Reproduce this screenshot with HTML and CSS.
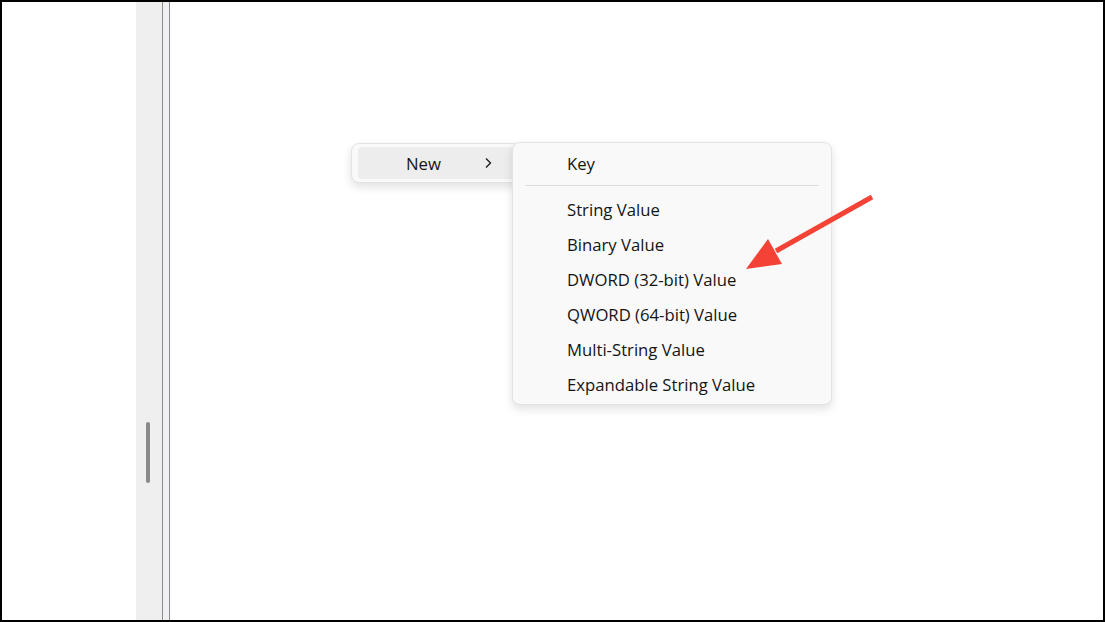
FILE: index.html
```html
<!DOCTYPE html>
<html>
<head>
<meta charset="utf-8">
<link rel="stylesheet" href="styles.css">
</head>
<body>
<div class="frame">
  <div class="left-pane"></div>
  <div class="sidebar"><div class="thumb"></div></div>
  <div class="divider"></div>
  <div class="main">
    <div class="menu parent-menu">
      <div class="item hovered">
        <span class="label">New</span>
        <svg class="chev" width="10" height="12" viewBox="0 0 10 12"><path d="M3 1.5 L7.5 6 L3 10.5" fill="none" stroke="#1a1a1a" stroke-width="1.3"/></svg>
      </div>
    </div>
    <div class="menu sub-menu">
      <div class="sitem">Key</div>
      <div class="sep"></div>
      <div class="sitem">String Value</div>
      <div class="sitem">Binary Value</div>
      <div class="sitem">DWORD (32-bit) Value</div>
      <div class="sitem">QWORD (64-bit) Value</div>
      <div class="sitem">Multi-String Value</div>
      <div class="sitem">Expandable String Value</div>
    </div>
    <svg class="arrow" width="140" height="90" viewBox="0 0 140 90">
      <line x1="132" y1="13" x2="36" y2="67" stroke="#f44336" stroke-width="5" stroke-linecap="butt"/>
      <polygon points="6,85 28,55 42,80" fill="#f44336"/>
    </svg>
  </div>
</div>
</body>
</html>
```
FILE: styles.css
```css
html, body {
  margin: 0;
  padding: 0;
  background: #ffffff;
}
body {
  font-family: "Open Sans", "Noto Sans", sans-serif;
  color: #141414;
}
.frame {
  box-sizing: border-box;
  width: 1105px;
  height: 622px;
  border: 2px solid #000;
  display: flex;
  background: #fff;
}
.left-pane {
  width: 134px;
  flex: none;
  background: #fff;
}
.sidebar {
  width: 26px;
  flex: none;
  background: #efefef;
  border-right: 1px solid #8a8a94;
  position: relative;
}
.thumb {
  position: absolute;
  left: 10px;
  top: 420px;
  width: 4px;
  height: 61px;
  border-radius: 2px;
  background: #8a8a8a;
}
.divider {
  width: 6px;
  flex: none;
  background: #f0f0f0;
  border-right: 1px solid #8a8a94;
}
.main {
  flex: 1;
  position: relative;
  background: #fff;
}
.menu {
  position: absolute;
  box-sizing: border-box;
  background: #f9f9f9;
  border: 1px solid #e3e3e3;
  border-radius: 8px;
  box-shadow: 0 4px 10px rgba(0,0,0,0.12);
}
.parent-menu {
  left: 181px;
  top: 141px;
  width: 170px;
  height: 40px;
  padding: 3px 4px 3px 6px;
}
.item.hovered {
  height: 32px;
  background: #ededed;
  border-radius: 4px;
  display: flex;
  align-items: center;
  position: relative;
}
.label {
  margin-left: 48px;
  font-size: 16.7px;
}
.chev {
  position: absolute;
  left: 125px;
  top: 10px;
}
.sub-menu {
  left: 342px;
  top: 140px;
  width: 320px;
  height: 263px;
  padding: 3px 12px 0 12px;
}
.sitem {
  height: 35px;
  line-height: 35px;
  padding-left: 42px;
  font-size: 16.7px;
  white-space: nowrap;
}
.sep {
  height: 1px;
  background: #dcdcdc;
  margin: 4px 0 6px 0;
}
.arrow {
  position: absolute;
  left: 570px;
  top: 182px;
}
```
